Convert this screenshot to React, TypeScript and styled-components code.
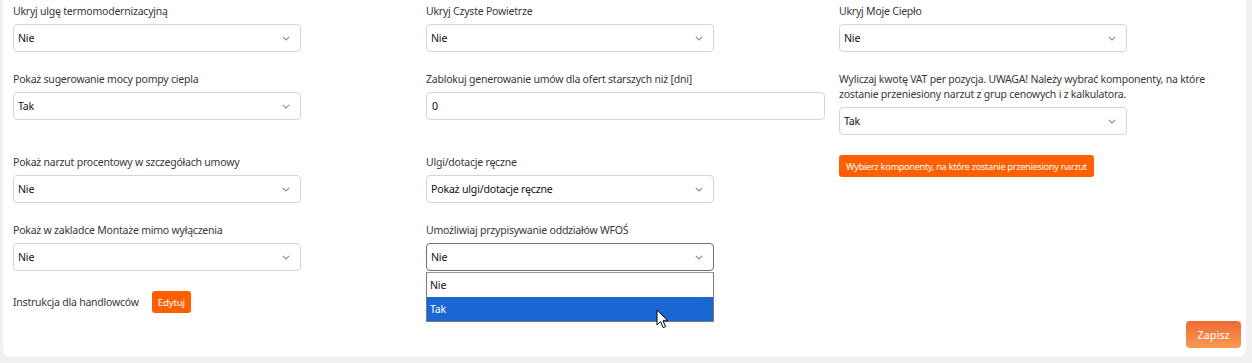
import React from "react";
import styled, { createGlobalStyle } from "styled-components";

const GlobalStyle = createGlobalStyle`
  html, body { margin: 0; padding: 0; background: #f1f1f1; }
  body { font-family: "Noto Sans", "Open Sans", sans-serif; }
  * { box-sizing: border-box; }
`;

const Page = styled.div`
  padding: 0 6px 6px 3px;
  width: 1252px;
  height: 363px;
`;

const Card = styled.div`
  background: #ffffff;
  border-radius: 0 0 8px 8px;
  padding: 4px 5px 9px 10px;
  display: flex;
  flex-direction: column;
`;

const Grid = styled.div`
  display: grid;
  grid-template-columns: repeat(3, minmax(0, 1fr));
  column-gap: 14px;
  row-gap: 20px;
  padding-right: 3px;
  align-items: start;
`;

const Field = styled.div`
  display: flex;
  flex-direction: column;
  gap: 5px;
  position: relative;
`;

const Label = styled.div`
  font-size: 10.5px;
  line-height: 15px;
  letter-spacing: -0.22px;
  color: #383838;
  white-space: nowrap;
`;

const SelectWrap = styled.div`
  position: relative;
  width: 288px;
`;

const SelectBox = styled.div<{ $focused?: boolean }>`
  height: 28px;
  border: 1px solid ${(p) => (p.$focused ? "#6f6f78" : "#d4d4dc")};
  border-radius: 4px;
  background: #fff;
  display: flex;
  align-items: center;
  justify-content: space-between;
  padding: 0 10px 0 4px;
  font-size: 10.6px;
  letter-spacing: -0.2px;
  color: #111111;
`;

const Input = styled.div`
  height: 28px;
  width: 399px;
  border: 1px solid #d4d4dc;
  border-radius: 4px;
  background: #fff;
  display: flex;
  align-items: center;
  padding: 0 5px;
  font-size: 10.6px;
  color: #111111;
`;

const DropList = styled.div`
  position: absolute;
  top: 29px;
  left: 0;
  width: 100%;
  background: #fff;
  border: 1px solid #7a7a7a;
  border-top-color: #9a9a9a;
  z-index: 5;
`;

const Option = styled.div<{ $active?: boolean }>`
  height: 24px;
  display: flex;
  align-items: center;
  padding: 0 3px;
  font-size: 10.6px;
  letter-spacing: -0.2px;
  color: ${(p) => (p.$active ? "#ffffff" : "#111111")};
  background: ${(p) => (p.$active ? "#1a67d3" : "transparent")};
`;

const Cursor = styled.svg`
  position: absolute;
  left: 229px;
  top: 36px;
  z-index: 6;
`;

const OrangeButton = styled.button<{ $wide?: boolean }>`
  background: #ff5f00;
  color: #fff;
  border: none;
  border-radius: 3px;
  height: 22px;
  padding: 0 ${(p) => (p.$wide ? "7px" : "6px")};
  font-family: inherit;
  font-size: ${(p) => (p.$wide ? "9.2px" : "9.8px")};
  letter-spacing: -0.3px;
  justify-self: start;
  align-self: start;
  cursor: pointer;
  white-space: nowrap;
`;

const InlineRow = styled.div`
  display: flex;
  align-items: center;
  gap: 13px;
`;

const Footer = styled.div`
  display: flex;
  justify-content: flex-end;
  margin-top: 8px;
`;

const SaveButton = styled.button`
  background: linear-gradient(180deg, #f06a34 0%, #f89a52 100%);
  color: #fff;
  border: none;
  border-radius: 4px;
  height: 27px;
  width: 55px;
  font-family: inherit;
  font-size: 11px;
  cursor: pointer;
`;

const Chevron = () => (
  <svg width="8" height="5" viewBox="0 0 8 5">
    <path d="M0.8 0.8l3.2 3.2L7.2 0.8" fill="none" stroke="#8a8a92" strokeWidth="1.1" />
  </svg>
);

const Select: React.FC<{ value: string; focused?: boolean; children?: React.ReactNode }> = ({
  value,
  focused,
  children,
}) => (
  <SelectWrap>
    <SelectBox $focused={focused}>
      <span>{value}</span>
      <Chevron />
    </SelectBox>
    {children}
  </SelectWrap>
);

const SelectField: React.FC<{ label: React.ReactNode; value: string }> = ({ label, value }) => (
  <Field>
    <Label>{label}</Label>
    <Select value={value} />
  </Field>
);

export default function App() {
  return (
    <>
      <GlobalStyle />
      <Page>
        <Card>
          <Grid>
            <SelectField label="Ukryj ulgę termomodernizacyjną" value="Nie" />
            <SelectField label="Ukryj Czyste Powietrze" value="Nie" />
            <SelectField label="Ukryj Moje Ciepło" value="Nie" />

            <SelectField label="Pokaż sugerowanie mocy pompy ciepla" value="Tak" />
            <Field>
              <Label>Zablokuj generowanie umów dla ofert starszych niż [dni]</Label>
              <Input>0</Input>
            </Field>
            <SelectField
              label={
                <>
                  Wyliczaj kwotę VAT per pozycja. UWAGA! Należy wybrać komponenty, na które
                  <br />
                  zostanie przeniesiony narzut z grup cenowych i z kalkulatora.
                </>
              }
              value="Tak"
            />

            <SelectField label="Pokaż narzut procentowy w szczegółach umowy" value="Nie" />
            <SelectField label="Ulgi/dotacje ręczne" value="Pokaż ulgi/dotacje ręczne" />
            <OrangeButton $wide>Wybierz komponenty, na które zostanie przeniesiony narzut</OrangeButton>

            <SelectField label="Pokaż w zakladce Montaże mimo wyłączenia" value="Nie" />
            <Field>
              <Label>Umożliwiaj przypisywanie oddziałów WFOŚ</Label>
              <Select value="Nie" focused>
                <DropList>
                  <Option>Nie</Option>
                  <Option $active>Tak</Option>
                  <Cursor width="13" height="20" viewBox="0 0 13 20">
                    <path
                      d="M1 1 L1 16 L4.6 12.6 L7.2 18.6 L9.6 17.6 L7 11.8 L12 11.8 Z"
                      fill="#ffffff"
                      stroke="#000000"
                      strokeWidth="1"
                      strokeLinejoin="round"
                    />
                  </Cursor>
                </DropList>
              </Select>
            </Field>
            <div />

            <InlineRow>
              <Label>Instrukcja dla handlowców</Label>
              <OrangeButton>Edytuj</OrangeButton>
            </InlineRow>
          </Grid>
          <Footer>
            <SaveButton>Zapisz</SaveButton>
          </Footer>
        </Card>
      </Page>
    </>
  );
}
